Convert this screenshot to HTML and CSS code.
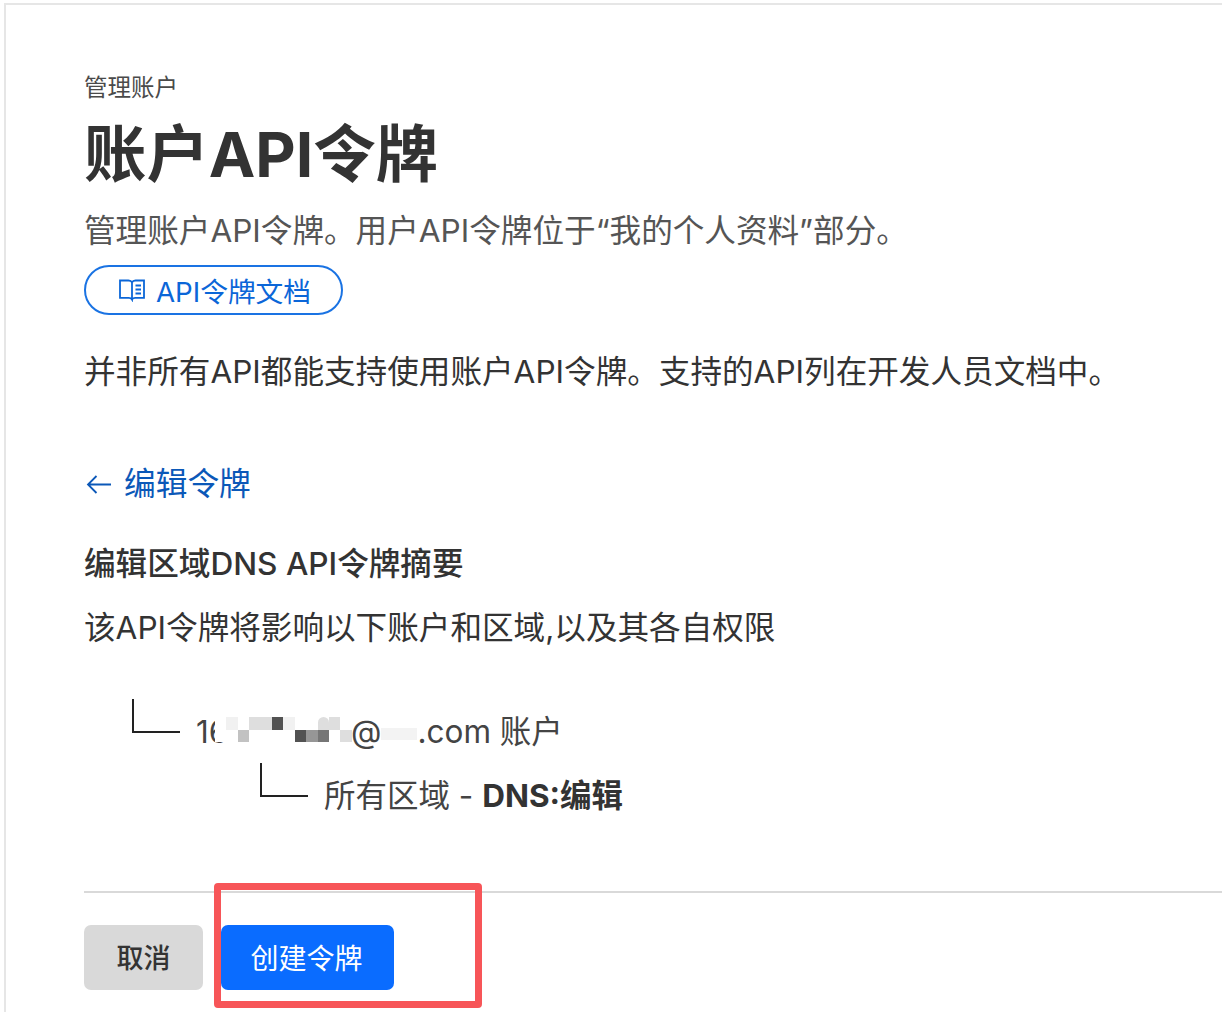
FILE: index.html
```html
<!DOCTYPE html>
<html lang="zh-CN">
<head>
<meta charset="utf-8">
<title>账户API令牌</title>
<link rel="stylesheet" href="styles.css">
</head>
<body>
<main class="panel">
  <p class="eyebrow">管理账户</p>
  <h1 class="title">账户API令牌</h1>
  <p class="lead">管理账户API令牌。用户API令牌位于“我的个人资料”部分。</p>
  <a class="doc-btn" href="#">
    <svg class="book" viewBox="0 0 26 24" width="26" height="24" fill="none" stroke="currentColor" stroke-width="1.8">
      <path d="M1 2.500h8.500c1.800 0 3 .8 3.500 2v17c-.6-1-1.700-1.600-3.200-1.600H1z"/>
      <path d="M13 4.500c.5-1.200 1.700-2 3.500-2H25v17.400h-8.800c-1.500 0-2.600.6-3.200 1.600"/>
      <path d="M16.500 7.500h5.500M16.500 11.500h5.500M16.500 15.500h5.500"/>
    </svg>
    <span>API令牌文档</span>
  </a>
  <p class="note">并非所有API都能支持使用账户API令牌。支持的API列在开发人员文档中。</p>
  <a class="back" href="#">
    <svg viewBox="0 0 26 24" width="26" height="24" fill="none" stroke="currentColor" stroke-width="1.8">
      <path d="M25 12.500H2M10.500 4L2 12.500l8.500 8.500"/>
    </svg>
    <span>编辑令牌</span>
  </a>
  <h2 class="summary">编辑区域DNS API令牌摘要</h2>
  <p class="desc">该API令牌将影响以下账户和区域,以及其各自权限</p>
  <div class="tree-row tree-account">
    <span class="elbow"></span>
    <span class="tree-text">
      <span class="partial">16</span>
      <span class="mosaic">
        <i></i><i class="m1"></i><i></i><i class="m2"></i><i class="m2"></i><i class="m5"></i><i class="m1"></i><i></i><i></i><i class="m2 blob"></i><i class="m2"></i><i></i>
        <i></i><i></i><i class="m3"></i><i></i><i></i><i></i><i></i><i class="m5"></i><i class="m4"></i><i class="m4b"></i><i></i><i class="m2"></i>
      </span>
      <span class="at">@</span><span class="mosaic-small"></span><span>.com 账户</span>
    </span>
  </div>
  <div class="tree-row tree-zone">
    <span class="elbow"></span>
    <span class="tree-text">所有区域 - <b>DNS:编辑</b></span>
  </div>
  <footer class="actions">
    <button class="btn btn-cancel" type="button">取消</button>
    <button class="btn btn-primary" type="button">创建令牌</button>
    <span class="highlight"></span>
  </footer>
</main>
</body>
</html>
```
FILE: styles.css
```css
* { box-sizing: border-box; }
html, body { margin: 0; height: 100%; overflow: hidden; background: #fff; }
body {
  font-family: "Inter", "Liberation Sans", "Noto Sans CJK SC", sans-serif;
  color: #333;
  padding-top: 3px;
  padding-left: 4px;
}
.panel {
  position: relative;
  height: 1009px;
  border-top: 2px solid #e6e6e6;
  border-left: 2px solid #e6e6e6;
  padding: 65px 0 0 78px;
}
p, h1, h2 { margin: 0; }
.eyebrow { font-size: 23.500px; line-height: 36px; color: #4a4a4a; }
.title { font-size: 62.400px; line-height: 92px; font-weight: 700; color: #333; margin-top: 3px; }
.lead { font-size: 31.600px; line-height: 50px; font-weight: 400; color: #555; margin-top: 5px; white-space: nowrap; }
.doc-btn {
  display: inline-flex; align-items: center; gap: 11px;
  width: 259px; height: 50px; margin-top: 9px; padding-left: 33px;
  border: 2px solid #1a73e3; border-radius: 25px;
  color: #0b66d8; font-size: 27.700px; text-decoration: none;
}
.note { font-size: 31.600px; line-height: 50px; font-weight: 400; color: #333; margin-top: 32px; white-space: nowrap; }
.back {
  display: flex; align-items: center; gap: 12px;
  color: #0b58b8; font-size: 31.700px; line-height: 50px; font-weight: 400; text-decoration: none;
  margin-top: 62px; height: 50px;
}
.back svg { margin-left: 2px; }
.summary { font-size: 31.600px; line-height: 50px; font-weight: 500; color: #333; margin-top: 30px; white-space: nowrap; }
.desc { font-size: 31.600px; line-height: 50px; font-weight: 400; color: #333; margin-top: 14px; white-space: nowrap; }
.tree-row { display: flex; align-items: flex-start; white-space: nowrap; font-size: 31.500px; line-height: 50px; font-weight: 400; color: #444; }
.tree-account { margin-top: 46px; padding-left: 48px; height: 64px; }
.tree-zone { padding-left: 176px; }
.elbow { display: block; width: 48px; height: 34px; border-left: 2px solid #222; border-bottom: 2px solid #222; margin-right: 16px; }
.tree-text { display: flex; align-items: center; height: 50px; margin-top: 8px; }
.tree-zone .tree-text { display: block; margin-top: 8px; }
.tree-text b { font-weight: 700; color: #333; }
.partial { display: block; width: 22px; }
.mosaic { display: grid; grid-template-columns: repeat(12, 11.400px); grid-auto-rows: 12.500px; width: 137px; margin: -5px 0 0 -3px; background: #fff; }
.mosaic i { display: block; }
.m1 { background: #f1f1f1; }
.m2 { background: #dedede; }
.m3 { background: #c2c2c2; }
.m4 { background: #969696; }
.m4b { background: #767676; }
.m5 { background: #525252; }
.blob { border-radius: 10px 10px 0 0; }
.at { margin-left: -1px; }
.mosaic-small { display: block; width: 36px; height: 12px; margin-top: 4px; background: #f3f3f3; }
.actions { position: absolute; left: 78px; right: 0; top: 886px; border-top: 2px solid #d9d9d9; display: flex; gap: 18px; padding-top: 32px; }
.btn { height: 65px; border: 0; border-radius: 7px; font-family: inherit; font-size: 27px; padding: 0 0 2px; }
.btn-cancel { width: 119px; background: #d9d9d9; color: #333; font-weight: 500; }
.btn-primary { width: 173px; background: #0a6cff; color: #fff; font-size: 28px; padding-right: 2px; }
.highlight {
  position: absolute; left: 130px; top: -10px; width: 268px; height: 125px;
  border: 7px solid #f75558; border-radius: 4px;
}
```
